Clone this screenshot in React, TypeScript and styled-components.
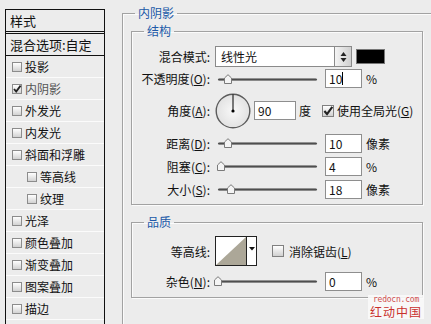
import styled, { createGlobalStyle } from "styled-components";

const Global = createGlobalStyle`
  html, body { margin: 0; padding: 0; background: #ececec; }
  body { width: 431px; height: 324px; overflow: hidden; }
`;

const Page = styled.div`
  position: relative;
  display: flex;
  align-items: flex-start;
  width: 431px;
  height: 324px;
  overflow: hidden;
  background: #ececec;
  font-family: "Noto Sans CJK SC", "Liberation Sans", sans-serif;
  font-size: 12px;
  color: #111;
`;

/* ---------- left style list ---------- */

const Side = styled.div`
  flex-shrink: 0;
  box-sizing: border-box;
  width: 100px;
  height: 330px;
  margin: 9px 0 0 5px;
  border: 1px solid #111;
  border-bottom: none;
  display: flex;
  flex-direction: column;
`;

const SideHead = styled.div<{ $double?: boolean }>`
  height: 21px;
  line-height: 21px;
  padding-left: 4px;
  font-size: 13px;
  border-bottom: ${(p) => (p.$double ? "3px double #111" : "1px solid #111")};
  white-space: nowrap;
`;

const SideItem = styled.div<{ $sub?: boolean; $active?: boolean }>`
  display: flex;
  align-items: center;
  gap: 3px;
  height: 21px;
  padding-left: ${(p) => (p.$sub ? 21 : 6)}px;
  border-bottom: 1px solid #fbfbfb;
  color: ${(p) => (p.$active ? "#555" : "#111")};
  white-space: nowrap;
`;

const MiniBox = styled.span`
  position: relative;
  box-sizing: border-box;
  width: 10px;
  height: 10px;
  border: 1px solid #8c8c8c;
  background: linear-gradient(#ffffff, #d2d2d2);
  flex-shrink: 0;
`;

const Tick = ({ size }: { size: number }) => (
  <svg
    width={size}
    height={size}
    viewBox="0 0 10 10"
    style={{ position: "absolute", left: -1, top: -1 }}
  >
    <path d="M2 5 L4.2 7.6 L8.6 1.6" fill="none" stroke="#222" strokeWidth="1.8" />
  </svg>
);

/* ---------- right groups ---------- */

const Group = styled.fieldset<{ $w: number; $h?: number; $ml?: number; $mt?: number; $pt?: number; $pb?: number }>`
  box-sizing: border-box;
  min-width: 0;
  width: ${(p) => p.$w}px;
  ${(p) => (p.$h ? `height: ${p.$h}px;` : "")}
  margin: ${(p) => p.$mt ?? 0}px 0 0 ${(p) => p.$ml ?? 0}px;
  padding: ${(p) => p.$pt ?? 0}px 0 ${(p) => p.$pb ?? 0}px 0;
  border: 1px solid #a2a2a2;
  box-shadow: 1px 1px 0 #fbfbfb, inset 1px 1px 0 #fbfbfb;
  flex-shrink: 0;
`;

const Title = styled.legend`
  margin-left: 12px;
  padding: 0 3px;
  line-height: 16px;
  font-size: 12px;
  color: #2059a8;
`;

const Stack = styled.div<{ $gap: number }>`
  display: flex;
  flex-direction: column;
  gap: ${(p) => p.$gap}px;
`;

const Row = styled.div<{ $h: number }>`
  display: flex;
  align-items: center;
  height: ${(p) => p.$h}px;
  white-space: nowrap;
`;

const Label = styled.span`
  width: 78px;
  margin-right: 5px;
  text-align: right;
  flex-shrink: 0;
  color: #111;
`;

const SelectBox = styled.div`
  box-sizing: border-box;
  display: flex;
  width: 137px;
  height: 21px;
  border: 1px solid #8a8a8a;
  background: #fff;
`;

const SelectText = styled.span`
  flex: 1;
  padding-left: 5px;
  line-height: 19px;
`;

const SelectBtn = styled.span`
  width: 16px;
  border-left: 1px solid #8a8a8a;
  background: linear-gradient(90deg, #f4f4f4, #cfcfcf);
  display: flex;
  align-items: center;
  justify-content: center;
`;

const Swatch = styled.span`
  box-sizing: border-box;
  width: 29px;
  height: 15px;
  margin-left: 4px;
  background: #000;
  border: 1px solid #777;
`;

const Slider = styled.span`
  position: relative;
  width: 99px;
  height: 12px;
  margin-left: 3px;
  flex-shrink: 0;
  &::before {
    content: "";
    position: absolute;
    left: 0;
    right: 0;
    top: 5px;
    height: 3px;
    border-radius: 2px;
    background: linear-gradient(#b4b4b4, #4e4e4e 50%, #a8a8a8);
  }
`;

const Thumb = styled.svg`
  position: absolute;
  top: 1px;
`;

const Field = styled.span<{ $w: number; $ml: number }>`
  box-sizing: border-box;
  display: inline-flex;
  align-items: center;
  width: ${(p) => p.$w}px;
  height: 19px;
  margin-left: ${(p) => p.$ml}px;
  padding-left: 3px;
  border: 1px solid #8e8e8e;
  background: #fff;
  color: #111;
`;

const Caret = styled.span`
  display: inline-block;
  width: 1px;
  height: 13px;
  background: #000;
`;

const Unit = styled.span<{ $ml?: number }>`
  margin-left: ${(p) => p.$ml ?? 4}px;
`;

const Check = styled.span<{ $ml: number }>`
  position: relative;
  box-sizing: border-box;
  width: 12px;
  height: 12px;
  margin-left: ${(p) => p.$ml}px;
  border: 1px solid #808080;
  background: linear-gradient(#ffffff, #d0d0d0);
  flex-shrink: 0;
`;

const Contour = styled.div`
  box-sizing: border-box;
  display: flex;
  width: 42px;
  height: 30px;
  border: 1px solid #222;
  background: #fff;
`;

const ContourArrow = styled.span`
  width: 10px;
  border-left: 1px solid #222;
  display: flex;
  justify-content: center;
  padding-top: 10px;
  box-sizing: border-box;
`;

const Watermark = styled.div`
  position: absolute;
  right: 7px;
  bottom: 5px;
  width: 56px;
  background: rgba(250, 250, 250, 0.9);
  color: #c9302c;
  text-align: center;
  white-space: nowrap;
`;

const WmSmall = styled.div`
  font-family: "DejaVu Sans Mono", monospace;
  font-size: 8px;
  line-height: 10px;
  letter-spacing: -0.2px;
  color: #d05050;
`;

const WmBig = styled.div`
  font-size: 12px;
  line-height: 14px;
  letter-spacing: 1px;
`;

const Knob = ({ pos }: { pos: number }) => (
  <Slider>
    <Thumb width="8" height="10" viewBox="0 0 8 10" style={{ left: pos * 0.99 - 4 }}>
      <path d="M0.5 9.5 V4 L4 0.7 L7.5 4 V9.5 Z" fill="#f4f4f4" stroke="#7a7a7a" strokeWidth="1" />
    </Thumb>
  </Slider>
);

const u = (s: string, k: string) => (
  <>
    {s}(<u>{k}</u>):
  </>
);

const sideItems = [
  { t: "投影" },
  { t: "内阴影", on: true },
  { t: "外发光" },
  { t: "内发光" },
  { t: "斜面和浮雕" },
  { t: "等高线", sub: true },
  { t: "纹理", sub: true },
  { t: "光泽" },
  { t: "颜色叠加" },
  { t: "渐变叠加" },
  { t: "图案叠加" },
  { t: "描边" },
];

export default function App() {
  return (
    <Page>
      <Global />
      <Side>
        <SideHead $double>样式</SideHead>
        <SideHead>混合选项:自定</SideHead>
        {sideItems.map((it) => (
          <SideItem key={it.t} $sub={it.sub} $active={it.on}>
            <MiniBox>{it.on && <Tick size={10} />}</MiniBox>
            {it.t}
          </SideItem>
        ))}
      </Side>

      <Group $w={320} $h={360} $ml={17} $mt={5}>
        <Title>内阴影</Title>

        <Group $w={292} $ml={8} $mt={2} $pt={7} $pb={4}>
          <Title>结构</Title>
          <Stack $gap={1}>
            <Row $h={21}>
              <Label>混合模式:</Label>
              <SelectBox>
                <SelectText>线性光</SelectText>
                <SelectBtn>
                  <svg width="7" height="12" viewBox="0 0 7 12">
                    <path d="M3.5 1 L6.5 5 H0.5 Z M3.5 11 L6.5 7 H0.5 Z" fill="#222" />
                  </svg>
                </SelectBtn>
              </SelectBox>
              <Swatch />
            </Row>
            <Row $h={21}>
              <Label>{u("不透明度", "O")}</Label>
              <Knob pos={10} />
              <Field $w={37} $ml={8}>
                10
                <Caret />
              </Field>
              <Unit>%</Unit>
            </Row>
            <Row $h={41}>
              <Label>{u("角度", "A")}</Label>
              <svg width="36" height="36" viewBox="0 0 36 36">
                <defs>
                  <radialGradient id="dial" cx="50%" cy="50%" r="50%">
                    <stop offset="0%" stopColor="#f8f8f8" />
                    <stop offset="100%" stopColor="#e2e2e2" />
                  </radialGradient>
                </defs>
                <circle cx="18" cy="18" r="16.8" fill="url(#dial)" stroke="#5c5c5c" strokeWidth="1.4" />
                <line x1="18" y1="18" x2="18" y2="1.5" stroke="#000" strokeWidth="1" />
                <circle cx="18" cy="18" r="1.6" fill="#000" />
              </svg>
              <Field $w={42} $ml={3}>90</Field>
              <Unit $ml={3}>度</Unit>
              <Check $ml={11}>
                <Tick size={12} />
              </Check>
              <Unit $ml={3}>
                使用全局光(<u>G</u>)
              </Unit>
            </Row>
            <Row $h={22}>
              <Label>{u("距离", "D")}</Label>
              <Knob pos={10} />
              <Field $w={37} $ml={8}>10</Field>
              <Unit>像素</Unit>
            </Row>
            <Row $h={22}>
              <Label>{u("阻塞", "C")}</Label>
              <Knob pos={3} />
              <Field $w={37} $ml={8}>4</Field>
              <Unit>%</Unit>
            </Row>
            <Row $h={22}>
              <Label>{u("大小", "S")}</Label>
              <Knob pos={13} />
              <Field $w={37} $ml={8}>18</Field>
              <Unit>像素</Unit>
            </Row>
          </Stack>
        </Group>

        <Group $w={292} $ml={8} $mt={9} $pt={6} $pb={5}>
          <Title>品质</Title>
          <Stack $gap={4}>
            <Row $h={30}>
              <Label>等高线:</Label>
              <Contour>
                <svg width="30" height="28" viewBox="0 0 30 28">
                  <path d="M0 28 L30 0 V28 Z" fill="#aca798" />
                </svg>
                <ContourArrow>
                  <svg width="6" height="4" viewBox="0 0 6 4">
                    <path d="M0 0 H6 L3 3.5 Z" fill="#111" />
                  </svg>
                </ContourArrow>
              </Contour>
              <Check $ml={15} />
              <Unit $ml={5}>
                消除锯齿(<u>L</u>)
              </Unit>
            </Row>
            <Row $h={22}>
              <Label>{u("杂色", "N")}</Label>
              <Knob pos={0} />
              <Field $w={37} $ml={8}>0</Field>
              <Unit>%</Unit>
            </Row>
          </Stack>
        </Group>
      </Group>

      <Watermark>
        <WmSmall>redocn.com</WmSmall>
        <WmBig>红动中国</WmBig>
      </Watermark>
    </Page>
  );
}
